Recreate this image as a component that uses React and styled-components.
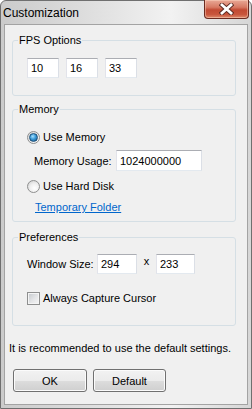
import styled, { createGlobalStyle } from "styled-components";

const Global = createGlobalStyle`
  html, body {
    margin: 0;
    padding: 0;
    background: #ffffff;
  }
  * {
    box-sizing: border-box;
  }
`;

/* window frame */
const Window = styled.div`
  width: 252px;
  height: 409px;
  display: flex;
  flex-direction: column;
  border: 1px solid #6f6f6f;
  border-radius: 6px 6px 0 0;
  background: linear-gradient(to right, #cbcbcb 0%, #dedede 35%, #f2f2f2 68%, #d6d6d6 100%);
  font-family: "Liberation Sans", Arial, sans-serif;
  font-size: 11px;
  color: #000;
`;

const TitleBar = styled.div`
  height: 23px;
  display: flex;
  align-items: flex-start;
  justify-content: space-between;
`;

const Title = styled.div`
  padding: 4px 0 0 2px;
  font-size: 12px;
  line-height: 16px;
  color: #000;
`;

const CloseButton = styled.div`
  width: 45px;
  height: 19px;
  margin: -1px 2px 0 0;
  display: flex;
  align-items: center;
  justify-content: center;
  border: 1px solid #6a2a20;
  border-top: none;
  border-radius: 0 0 4px 4px;
  background: linear-gradient(#e9a996 0%, #d77a64 40%, #c24a33 55%, #c8553c 80%, #dd8a6c 100%);
  box-shadow: inset 0 0 0 1px rgba(255, 220, 200, 0.45);
`;

const Client = styled.div`
  flex: 1;
  margin: 0 3px 3px 3px;
  border: 1px solid #a3a3a3;
  background: #f0f0f0;
  padding: 9px 11px 0 7px;
  display: flex;
  flex-direction: column;
`;

/* group boxes */
const Group = styled.fieldset`
  margin: ${(p) => p.$top || 0}px 0 0 0;
  padding: ${(p) => p.$pad};
  border: 1px solid #d5dfe5;
  border-radius: 3px;
  min-width: 0;
`;

const Legend = styled.legend`
  margin-left: 5px;
  padding: 0 1px;
  line-height: 13px;
  color: #000;
`;

const Row = styled.div`
  display: flex;
  align-items: center;
  gap: ${(p) => p.$gap || 0}px;
  height: ${(p) => p.$h || 16}px;
  margin-top: ${(p) => p.$mt || 0}px;
  padding-left: ${(p) => p.$indent || 0}px;
`;

const TextBox = styled.input`
  width: ${(p) => p.$w}px;
  height: ${(p) => p.$h || 20}px;
  padding: 0 0 0 3px;
  margin: 0;
  border: 1px solid;
  border-color: #abadb3 #dbdfe6 #e3e9ef #e2e3ea;
  background: #fff;
  font-family: "Liberation Sans", Arial, sans-serif;
  font-size: 11px;
  color: #000;
  outline: none;
`;

const Label = styled.span`
  width: ${(p) => (p.$w ? `${p.$w}px` : "auto")};
  flex-shrink: 0;
  line-height: 14px;
`;

const Times = styled.span`
  width: 19px;
  text-align: center;
  align-self: flex-start;
  line-height: 12px;
  padding-top: 1px;
`;

const Radio = styled.span`
  width: 13px;
  height: 13px;
  border-radius: 50%;
  border: 1px solid #8e8f8f;
  background: radial-gradient(circle at 60% 65%, #ffffff 0%, #f0f0f0 45%, #c9c9c9 100%);
  display: flex;
  align-items: center;
  justify-content: center;
  flex-shrink: 0;

  &::after {
    content: "";
    display: ${(p) => (p.$on ? "block" : "none")};
    width: 7px;
    height: 7px;
    border-radius: 50%;
    border: 1px solid #1b4f78;
    background: radial-gradient(circle at 40% 35%, #a6e2ff 0%, #3b9ad8 45%, #13507f 100%);
  }
`;

const Check = styled.span`
  width: 13px;
  height: 13px;
  border: 1px solid #8e8f8f;
  background: linear-gradient(135deg, #c3c7cc 0%, #e4e5e7 55%, #f6f6f6 100%);
  box-shadow: inset 0 0 0 1px #f4f4f4;
  flex-shrink: 0;
`;

const Link = styled.a`
  color: #0066cc;
  text-decoration: underline;
  line-height: 14px;
  cursor: pointer;
`;

const Note = styled.div`
  margin: 15px 0 0 -3px;
  line-height: 14px;
`;

const Buttons = styled.div`
  display: flex;
  gap: 6px;
  margin: 14px 0 0 1px;
`;

const Button = styled.button`
  width: ${(p) => p.$w}px;
  height: 23px;
  padding: 1px 0 0 0;
  border: 1px solid #707070;
  border-radius: 3px;
  background: linear-gradient(#f2f2f2 0%, #ebebeb 50%, #dddddd 51%, #cfcfcf 100%);
  box-shadow: inset 0 0 0 1px #fbfbfb;
  font-family: "Liberation Sans", Arial, sans-serif;
  font-size: 11px;
  color: #000;
`;

const CloseIcon = () => (
  <svg width="15" height="12" viewBox="0 0 15 12">
    <path d="M3 2 L12 10 M12 2 L3 10" stroke="#5a2a22" strokeWidth="4.6" strokeLinecap="square" />
    <path d="M3 2 L12 10 M12 2 L3 10" stroke="#ffffff" strokeWidth="2.8" strokeLinecap="square" />
  </svg>
);

export default function App() {
  return (
    <>
      <Global />
      <Window>
        <TitleBar>
          <Title>Customization</Title>
          <CloseButton>
            <CloseIcon />
          </CloseButton>
        </TitleBar>
        <Client>
          <Group $pad="11px 0 17px 0">
            <Legend>FPS Options</Legend>
            <Row $indent={14} $h={20} $gap={7}>
              <TextBox $w={32} defaultValue="10" />
              <TextBox $w={32} defaultValue="16" />
              <TextBox $w={32} defaultValue="33" />
            </Row>
          </Group>

          <Group $top={7} $pad="13px 0 6px 0">
            <Legend>Memory</Legend>
            <Row $indent={14} $gap={3}>
              <Radio $on />
              <Label>Use Memory</Label>
            </Row>
            <Row $indent={21} $h={21} $mt={5}>
              <Label $w={82}>Memory Usage:</Label>
              <TextBox $w={86} $h={21} defaultValue="1024000000" />
            </Row>
            <Row $indent={14} $gap={3} $mt={7}>
              <Radio />
              <Label>Use Hard Disk</Label>
            </Row>
            <Row $indent={22} $mt={5}>
              <Link>Temporary Folder</Link>
            </Row>
          </Group>

          <Group $top={9} $pad="10px 0 19px 0">
            <Legend>Preferences</Legend>
            <Row $indent={14} $h={20}>
              <Label $w={70}>Window Size:</Label>
              <TextBox $w={40} defaultValue="294" />
              <Times>x</Times>
              <TextBox $w={39} defaultValue="233" />
            </Row>
            <Row $indent={14} $gap={3} $mt={16}>
              <Check />
              <Label>Always Capture Cursor</Label>
            </Row>
          </Group>

          <Note>It is recommended to use the default settings.</Note>

          <Buttons>
            <Button $w={74}>OK</Button>
            <Button $w={73}>Default</Button>
          </Buttons>
        </Client>
      </Window>
    </>
  );
}
